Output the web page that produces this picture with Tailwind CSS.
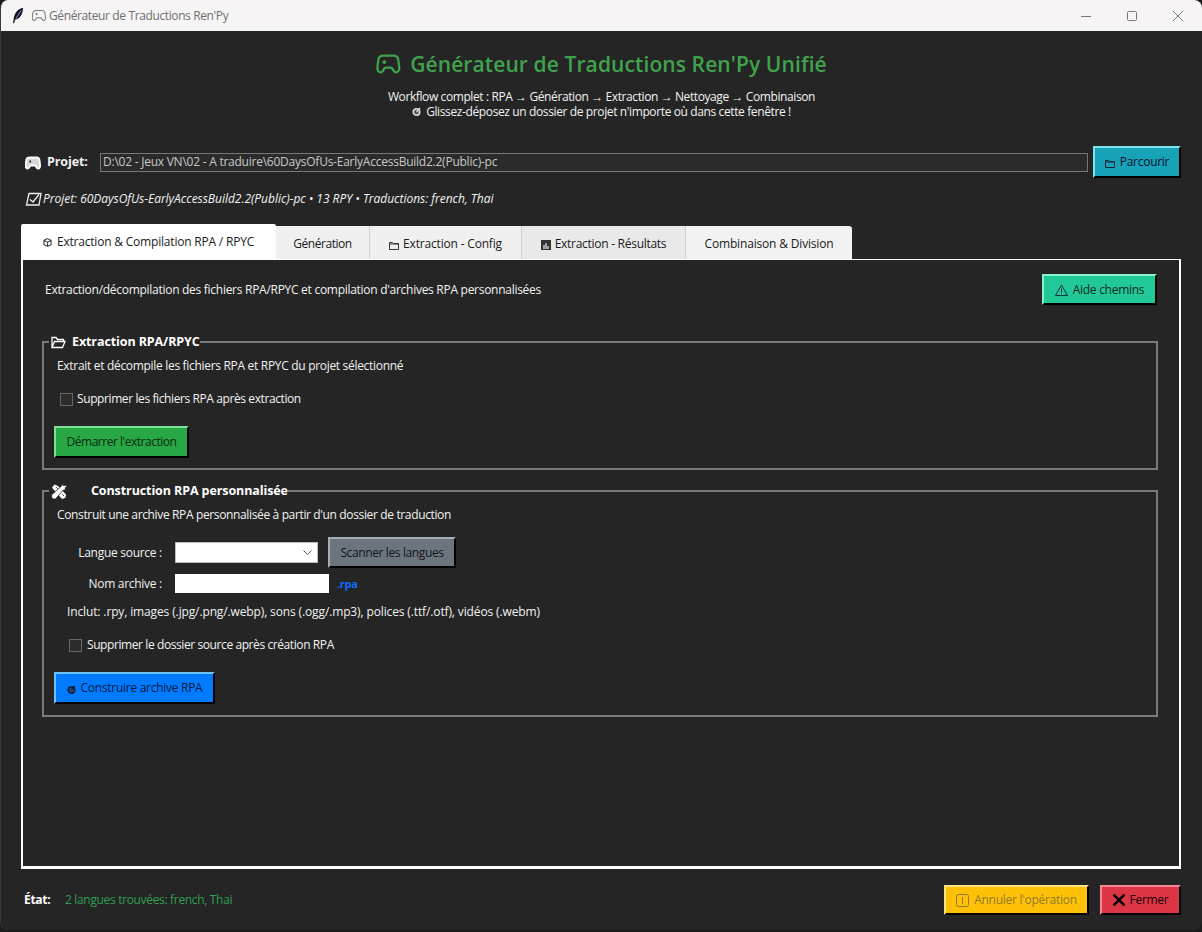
<!DOCTYPE html>
<html lang="fr">
<head>
<meta charset="utf-8">
<title>Générateur de Traductions Ren'Py</title>
<script src="https://cdn.jsdelivr.net/npm/@tailwindcss/browser@4"></script>
</head>
<body class="bg-[#1c1c1c]">
<div class="w-[1202px] h-[930px] overflow-hidden flex flex-col rounded-t-[8px] rounded-b-[8px] bg-[#252525] border-l border-[#3a3a3a] text-[12px] leading-[16px] text-[#f2f2f2] font-['Open_Sans',sans-serif] tracking-[-0.28px]">

  <!-- title bar -->
  <div class="h-[31px] shrink-0 bg-[#f6f4f4] flex items-center text-[#6f6f6f]">
    <svg class="ml-[11px] w-[12px] h-[17px]" viewBox="0 0 12 16"><path d="M11 .2C6.500 1 3 5 2 9.500L1 15.500l1.200.2.8-3.500C7.500 11.500 11 7 11 .2z" fill="#10131f"/><path d="M9 3 4 11" stroke="#8aa0d0" stroke-width="1"/></svg>
    <svg class="ml-[8px] w-[14px] h-[13px]" viewBox="-.5 1 25 20" fill="none" stroke="#777" stroke-width="1.800"><path d="M6 2h12c3 0 4 2 4.500 4l1 8c.5 3.500-1 6-3.200 6-2 0-3-2-4-4-.5-1-1-1-2-1h-5c-1 0-1.500 0-2 1-1 2-2 4-4 4C1.100 20-.4 17.500.1 14l1-8C1.600 4 3 2 6 2z"/><path d="M7.500 6.500v4M5.500 8.500h4M15 7h.1M17.500 10h.1"/></svg>
    <span class="ml-[3px] text-[12px] tracking-[-0.38px]">Générateur de Traductions Ren'Py</span>
    <div class="ml-auto flex items-center">
      <svg class="w-[10px] h-[10px] mr-[36px]" viewBox="0 0 10 10"><path d="M0 5.500h10" stroke="#777"/></svg>
      <svg class="w-[10px] h-[10px] mr-[36px]" viewBox="0 0 10 10"><rect x=".5" y=".5" width="9" height="9" rx="1" fill="none" stroke="#777"/></svg>
      <svg class="w-[10px] h-[10px] mr-[19px]" viewBox="0 0 10 10"><path d="M0 0l10 10M10 0L0 10" stroke="#777"/></svg>
    </div>
  </div>

  <!-- header -->
  <div class="flex flex-col items-center pt-[19px] shrink-0">
    <div class="flex items-center h-[28px] text-[#3fa34d] text-[21px] font-semibold tracking-[0.1px]">
      <svg class="w-[25px] h-[22px] mr-[9px]" viewBox="-1.500 .5 27 21" fill="none" stroke="#3fa34d" stroke-width="2.400"><path d="M6 2h12c3 0 4 2 4.500 4l1 8c.5 3.500-1 6-3.200 6-2 0-3-2-4-4-.5-1-1-1-2-1h-5c-1 0-1.500 0-2 1-1 2-2 4-4 4C1.100 20-.4 17.500.1 14l1-8C1.600 4 3 2 6 2z"/><path d="M7.500 7v4M5.500 9h4M15 7.500h.1M18 10.500h.1M12 5.500h.1" stroke-width="2.200"/></svg>
      <span>Générateur de Traductions Ren'Py Unifié</span>
    </div>
    <div class="mt-[11px] h-[15px] leading-[15px] tracking-[-0.4px]">Workflow complet : RPA → Génération → Extraction → Nettoyage → Combinaison</div>
    <div class="h-[15px] leading-[15px] flex items-center tracking-[-0.38px]">
      <svg class="w-[9px] h-[9px] mr-[5px]" viewBox="0 0 10 10"><circle cx="5" cy="5.500" r="3.600" fill="#555" stroke="#ddd" stroke-width="1.800"/><path d="M5 5.500L9 1" stroke="#ddd" stroke-width="1.500"/></svg>
      <span>Glissez-déposez un dossier de projet n'importe où dans cette fenêtre !</span>
    </div>
  </div>

  <!-- project row -->
  <div class="flex items-center mt-[27px] ml-[25px] h-[32px] shrink-0">
    <svg class="w-[16px] h-[14px] -ml-[1px] mt-[1px]" viewBox="-1 1 26 20" fill="#d8d8d8" stroke="#fafafa" stroke-width="3"><path d="M6 2h12c3 0 4 2 4.500 4l1 8c.5 3.500-1 6-3.200 6-2 0-3-2-4-4-.5-1-1-1-2-1h-5c-1 0-1.500 0-2 1-1 2-2 4-4 4C1.100 20-.4 17.500.1 14l1-8C1.600 4 3 2 6 2z"/><path d="M7.500 7v3M6 8.500h3M15 7h.1M17.500 10h.1" stroke="#252525" stroke-width="2.400"/></svg>
    <span class="ml-[6px] w-[53px] font-bold text-[12.500px] tracking-[-0.1px]">Projet:</span>
    <div class="w-[988px] h-[19px] border border-[#777] bg-[#2b2b2b] text-[#c8c8c8] pl-[2px] leading-[16px] tracking-[-0.24px]">D:\02 - Jeux VN\02 - A traduire\60DaysOfUs-EarlyAccessBuild2.2(Public)-pc</div>
    <button class="ml-[5px] w-[88px] h-[32px] bg-[#17a2b8] border-2 border-t-[#7fe3ee] border-l-[#7fe3ee] border-r-black border-b-black text-[#0a1030] flex items-center justify-center">
      <svg class="w-[10px] h-[10px] mr-[5px] mt-[2px]" viewBox="0 0 10 10" fill="none" stroke="#10263a"><path d="M.5 9.500v-7h3l1 1h5v6z M.5 4h9"/></svg>Parcourir
    </button>
  </div>

  <!-- project summary -->
  <div class="flex items-center ml-[24px] mt-[13px] h-[16px] italic shrink-0 tracking-[-0.03px]">
    <svg class="w-[17px] h-[15px] mr-[1px]" viewBox="0 0 17 15" fill="none" stroke="#eee" stroke-width="1.300"><path d="M4 1.500h12L14 13H1.500z"/><path d="M5 7.500l3 2.500 6-7.500"/></svg>
    <span>Projet: 60DaysOfUs-EarlyAccessBuild2.2(Public)-pc • 13 RPY • Traductions: french, Thai</span>
  </div>

  <!-- tabs -->
  <div class="flex items-end ml-[20px] mt-[17px] h-[35px] shrink-0 text-[#1a1a1a]">
    <div class="w-[255px] h-[35px] bg-white rounded-t-[2px] flex items-center justify-center tracking-[-0.2px]">
      <svg class="w-[9px] h-[9px] mr-[5px] mt-[2px]" viewBox="0 0 10 10" fill="none" stroke="#444" stroke-width="1.200"><path d="M5 .7l4 2v4.600l-4 2-4-2V2.700zM1 2.700l4 2 4-2M5 4.700v4.600"/></svg>Extraction &amp; Compilation RPA / RPYC
    </div>
    <div class="w-[94px] h-[33px] pt-[2px] bg-[#f0f0f0] border-r border-[#cfcfcf] flex items-center justify-center tracking-[-0.45px]">Génération</div>
    <div class="w-[152px] h-[33px] pt-[2px] bg-[#f0f0f0] border-r border-[#cfcfcf] flex items-center justify-center tracking-[-0.18px]">
      <svg class="w-[10px] h-[10px] mr-[4px] mt-[2px]" viewBox="0 0 10 10" fill="none" stroke="#333"><path d="M.5 9.500v-7h3l1 1h5v6z M.5 4h9"/></svg>Extraction - Config
    </div>
    <div class="w-[164px] h-[33px] pt-[2px] bg-[#e9e9e9] border-r border-[#cfcfcf] flex items-center justify-center">
      <svg class="w-[10px] h-[10px] mr-[4px] mt-[2px]" viewBox="0 0 10 10"><rect width="10" height="10" fill="#333"/><path d="M3 9V5M5 9V3M7 9V6" stroke="#eee" stroke-width="1.200"/></svg>Extraction - Résultats
    </div>
    <div class="w-[166px] h-[33px] pt-[2px] bg-[#f2f2f2] rounded-tr-[3px] flex items-center justify-center tracking-[-0.17px]">Combinaison &amp; Division</div>
  </div>

  <!-- panel -->
  <div class="ml-[20px] w-[1160px] h-[610px] shrink-0 border-l-2 border-r-2 border-b-[3px] border-t border-white px-[19px] pt-[14px]">
    <div class="flex items-center justify-between h-[31px]">
      <span class="ml-[3px]">Extraction/décompilation des fichiers RPA/RPYC et compilation d'archives RPA personnalisées</span>
      <button class="w-[115px] h-[31px] mr-[3px] bg-[#20c997] border-2 border-t-[#86f0cf] border-l-[#86f0cf] border-r-black border-b-black text-[#0b2a20] flex items-center justify-center">
        <svg class="w-[13px] h-[12px] mr-[5px]" viewBox="0 0 13 12" fill="none" stroke="#123" stroke-width=".9"><path d="M6.500 1L12.500 11.500H.5z M6.500 4.500v4M6.500 9.500v.8"/></svg>Aide chemins
      </button>
    </div>

    <!-- group 1 -->
    <fieldset class="mt-[28px] h-[137px] border-2 border-[#7a7a7a] pl-[11px] mr-[2px]">
      <legend class="-ml-[6px] flex items-center h-[18px] font-bold text-[12.500px] tracking-[-0.1px] text-white">
        <svg class="w-[15px] h-[13px] mr-[6px] ml-[2px]" viewBox="0 0 15 13" fill="none" stroke="#fff" stroke-width="1.300"><path d="M1 11.500V1.500h4l1.500 2h6v2M1 11.500h10.500l2.500-6H3.500z"/></svg>Extraction RPA/RPYC
      </legend>
      <div class="ml-[2px] mt-[7px] h-[16px] tracking-[-0.31px]">Extrait et décompile les fichiers RPA et RPYC du projet sélectionné</div>
      <label class="flex items-center ml-[5px] mt-[17px] h-[16px] tracking-[-0.4px]">
        <span class="w-[13px] h-[13px] border border-[#666] bg-[#2c2c2c] mr-[4px]"></span>Supprimer les fichiers RPA après extraction
      </label>
      <button class="block -ml-[1px] mt-[19px] w-[135px] h-[32px] bg-[#28a745] border-2 border-t-[#7fe098] border-l-[#7fe098] border-r-black border-b-black text-[#0a2a12] tracking-[-0.48px]">Démarrer l'extraction</button>
    </fieldset>

    <!-- group 2 -->
    <fieldset class="mt-[12px] h-[235px] border-2 border-[#7a7a7a] pl-[11px] mr-[2px]">
      <legend class="-ml-[6px] flex items-center h-[18px] font-bold text-[12.500px] tracking-[-0.1px] text-white">
        <svg class="w-[16px] h-[15px] mr-[24px] ml-[2px]" viewBox="0 0 16 15" fill="#fff"><path d="M1 3.500l2.500-3 3.500 1.500 8 8.500-.5 3-2.500 1.500-1.500-.5L3 6z"/><path d="M9.500 3l2.500-3 .8 2 1.700-1 1.500 2-2 .8.5 2-2.500.5L4.500 15 2 15 .5 13v-2z" stroke="#252525" stroke-width=".8"/><path d="M5 3l2 2M11 10l2 2" stroke="#252525" stroke-width=".8"/></svg>Construction RPA personnalisée
      </legend>
      <div class="ml-[2px] mt-[7px] h-[16px] tracking-[-0.36px]">Construit une archive RPA personnalisée à partir d'un dossier de traduction</div>
      <div class="flex items-center mt-[14px] h-[31px]">
        <span class="w-[107px] text-right">Langue source :</span>
        <div class="ml-[13px] w-[143px] h-[21px] bg-white border border-[#bbb] flex items-center justify-end pr-[5px]">
          <svg class="w-[9px] h-[5px]" viewBox="0 0 9 5" fill="none" stroke="#555"><path d="M.5 .5L4.500 4.500 8.500 .5"/></svg>
        </div>
        <button class="ml-[10px] w-[128px] h-[31px] bg-[#6c757d] border-2 border-t-[#a5adb5] border-l-[#a5adb5] border-r-black border-b-black text-[#10151a] tracking-[-0.38px]">Scanner les langues</button>
      </div>
      <div class="flex items-center mt-[6px] h-[19px]">
        <span class="w-[107px] text-right">Nom archive :</span>
        <div class="ml-[13px] w-[154px] h-[19px] bg-white"></div>
        <span class="ml-[8px] text-[#0d6efd] font-bold text-[11px]">.rpa</span>
      </div>
      <div class="ml-[12px] mt-[11px] h-[16px] tracking-[-0.13px]">Inclut: .rpy, images (.jpg/.png/.webp), sons (.ogg/.mp3), polices (.ttf/.otf), vidéos (.webm)</div>
      <label class="flex items-center ml-[14px] mt-[17px] h-[16px] tracking-[-0.41px]">
        <span class="w-[13px] h-[13px] border border-[#666] bg-[#2c2c2c] mr-[5px]"></span>Supprimer le dossier source après création RPA
      </label>
      <button class="flex items-center justify-center -ml-[1px] mt-[19px] w-[161px] h-[32px] bg-[#007bff] border-2 border-t-[#6fc0ff] border-l-[#6fc0ff] border-r-black border-b-black text-[#04163a]">
        <svg class="w-[9px] h-[9px] mr-[5px] mt-[2px]" viewBox="0 0 10 10"><circle cx="5" cy="5.500" r="3.600" fill="#2a4a80" stroke="#123" stroke-width="1.800"/><path d="M5 5.500L9 1" stroke="#123" stroke-width="1.500"/></svg>Construire archive RPA
      </button>
    </fieldset>
  </div>

  <!-- footer -->
  <div class="flex items-center ml-[23px] mt-[16px] h-[30px] shrink-0">
    <span class="w-[41px] font-bold text-white">État:</span>
    <span class="text-[#2f9e50] tracking-[-0.33px]">2 langues trouvées: french, Thai</span>
    <button class="ml-auto w-[145px] h-[30px] bg-[#ffc107] border-2 border-t-[#ffe580] border-l-[#ffe580] border-r-black border-b-black text-[#8f7a2a] flex items-center justify-center">
      <svg class="w-[13px] h-[13px] mr-[5px]" viewBox="0 0 13 13" fill="none" stroke="#8f7a2a"><rect x=".5" y=".5" width="12" height="12" rx="2"/><path d="M6.500 3v7"/></svg>Annuler l'opération
    </button>
    <button class="ml-[11px] mr-[21px] w-[81px] h-[30px] bg-[#dc3545] border-2 border-t-[#f58a95] border-l-[#f58a95] border-r-black border-b-black text-[#1a0508] flex items-center justify-center">
      <svg class="w-[12px] h-[12px] mr-[5px]" viewBox="0 0 11 11" stroke="#000" stroke-width="2.200"><path d="M.5 .5l10 10M10.500 .5l-10 10"/></svg>Fermer
    </button>
  </div>
</div>
</body>
</html>
